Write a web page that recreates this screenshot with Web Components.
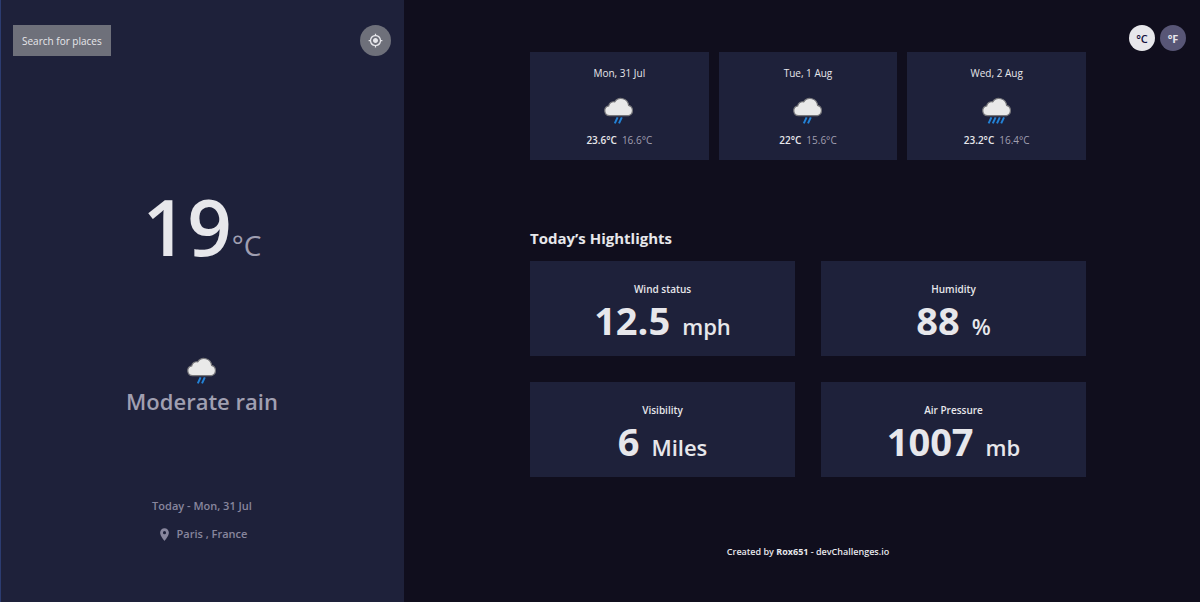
<!DOCTYPE html>
<html lang="en">
<head>
<meta charset="utf-8">
<meta name="viewport" content="width=device-width, initial-scale=1">
<title>Weather App</title>
<style>
  body {
    margin: 0;
    background: #100e1d;
    color: #e7e7eb;
    font-family: "Segoe UI", "Open Sans", "Noto Sans", sans-serif;
    --panel: #1e213a;
    --light: #e7e7eb;
    --muted: #a09fb1;
    --dim: #88869d;
  }
</style>
</head>
<body>
<weather-app></weather-app>
<script>
const define = (name, html, setup) => {
  const template = document.createElement('template');
  template.innerHTML = html;
  customElements.define(name, class extends HTMLElement {
    constructor() {
      super();
      this.attachShadow({ mode: 'open' }).append(template.content.cloneNode(true));
    }
    connectedCallback() {
      if (setup) setup(this);
    }
  });
};

// Cloud with two or four rain streaks, chosen by the "drops" attribute.
define('rain-icon', `
  <style>
    :host { display: block; width: 32px; height: 32px; }
    svg { display: block; width: 100%; height: 100%; }
    .four { display: none; }
    :host([drops="4"]) .four { display: block; }
    :host([drops="4"]) .two { display: none; }
  </style>
  <svg viewBox="0 0 32 32" aria-hidden="true">
    <path d="M6.600 21.600a4.900 4.900 0 0 1-.9-9.700 5 5 0 0 1 6-4A7.600 7.600 0 0 1 25.600 11.400a5.300 5.300 0 0 1 0 10.200z" fill="#e9e9e9" stroke="#77777b" stroke-width="1.200"/>
    <g stroke="#2382d6" stroke-width="2">
      <path class="two" d="M14.600 23.400l-2.800 6M18.800 23.400l-2.800 6"/>
      <path class="four" d="M10.400 23.400l-2.800 6M14.600 23.400l-2.800 6M18.800 23.400l-2.800 6M23 23.400l-2.800 6"/>
    </g>
  </svg>`);

define('unit-toggle', `
  <style>
    :host { display: flex; justify-content: flex-end; gap: 5px; }
    button {
      width: 26px; height: 26px; padding: 0; border: 0; border-radius: 50%;
      background: #585676; color: var(--light);
      font-family: inherit; font-size: 11px; font-weight: 700;
      text-align: center; cursor: pointer;
    }
    button[aria-pressed="true"] { background: var(--light); color: #110e3c; font-weight: 600; }
  </style>
  <button type="button" aria-pressed="true">°C</button>
  <button type="button" aria-pressed="false">°F</button>`,
  host => {
    const buttons = host.shadowRoot.querySelectorAll('button');
    buttons.forEach(b => b.onclick = () =>
      buttons.forEach(o => o.setAttribute('aria-pressed', o === b)));
  });

define('forecast-card', `
  <style>
    :host {
      display: flex; flex-direction: column; align-items: center;
      padding: 12px 8px; background: var(--panel); font-size: 10px; line-height: 18px;
    }
    rain-icon { margin: 12px 0 6px; }
    .range { display: flex; gap: 5px; line-height: 16px; }
    .max { font-weight: 600; }
    .min { color: var(--muted); }
  </style>
  <slot></slot>
  <rain-icon></rain-icon>
  <div class="range"><span class="max"></span><span class="min"></span></div>`,
  host => {
    const root = host.shadowRoot;
    root.querySelector('rain-icon').setAttribute('drops', host.getAttribute('drops'));
    root.querySelector('.max').textContent = host.getAttribute('max');
    root.querySelector('.min').textContent = host.getAttribute('min');
  });

define('highlight-card', `
  <style>
    :host { display: block; padding: 20px 8px 9px; background: var(--panel); text-align: center; }
    h3 { margin: 0 0 2px; font-size: 10px; line-height: 16px; font-weight: 600; }
    p {
      display: flex; justify-content: center; align-items: baseline; gap: 12px;
      margin: 0; font-size: 22px; line-height: 42px; font-weight: 600;
    }
    .value { font-size: 38px; font-weight: 700; }
  </style>
  <h3><slot></slot></h3>
  <p><span class="value"></span><span class="unit"></span></p>`,
  host => {
    host.shadowRoot.querySelector('.value').textContent = host.getAttribute('value');
    host.shadowRoot.querySelector('.unit').textContent = host.getAttribute('unit');
  });

define('current-weather', `
  <style>
    :host {
      display: flex; flex-direction: column; box-sizing: border-box;
      padding: 25px 13px 25px 12px; border-left: 1px solid #2c3c70;
      background: var(--panel); color: var(--muted); text-align: center;
    }
    .bar { display: flex; justify-content: space-between; }
    button { border: 0; background: #6e707a; color: var(--light); cursor: pointer; }
    .search { height: 31px; padding: 0 9px; font-family: inherit; font-size: 10px; }
    .locate { display: grid; place-items: center; width: 31px; height: 31px; padding: 0; border-radius: 50%; }
    .temp { display: flex; justify-content: center; align-items: baseline; margin-top: 114px; line-height: 112px; }
    .temp b { color: var(--light); font-size: 78px; font-weight: 600; }
    .temp span { font-size: 28px; line-height: 32px; }
    rain-icon { align-self: center; margin-top: 72px; }
    h1 { margin: 0; font-size: 22px; line-height: 30px; font-weight: 600; }
    p { margin: 0; color: var(--dim); font-size: 11px; line-height: 20px; font-weight: 600; }
    .date { margin-top: 80px; }
    .place { display: flex; justify-content: center; align-items: center; gap: 5px; margin-top: 8px; }
  </style>
  <div class="bar">
    <button class="search" type="button">Search for places</button>
    <button class="locate" type="button" aria-label="Use my location">
      <svg width="15" height="15" viewBox="0 0 24 24" fill="currentColor" aria-hidden="true"><path d="M12 8c-2.210 0-4 1.790-4 4s1.790 4 4 4 4-1.790 4-4-1.790-4-4-4zm8.940 3A8.994 8.994 0 0 0 13 3.060V1h-2v2.060A8.994 8.994 0 0 0 3.060 11H1v2h2.060A8.994 8.994 0 0 0 11 20.940V23h2v-2.060A8.994 8.994 0 0 0 20.940 13H23v-2h-2.060zM12 19c-3.870 0-7-3.130-7-7s3.130-7 7-7 7 3.130 7 7-3.130 7-7 7z"/></svg>
    </button>
  </div>
  <div class="temp"><b>19</b><span>°C</span></div>
  <rain-icon drops="2"></rain-icon>
  <h1>Moderate rain</h1>
  <p class="date">Today - Mon, 31 Jul</p>
  <p class="place">
    <svg width="15" height="15" viewBox="0 0 24 24" fill="currentColor" aria-hidden="true"><path d="M12 2C8.130 2 5 5.130 5 9c0 5.250 7 13 7 13s7-7.750 7-13c0-3.870-3.130-7-7-7zm0 9.500a2.500 2.500 0 0 1 0-5 2.500 2.500 0 0 1 0 5z"/></svg>
    <span>Paris , France</span>
  </p>`);

define('weather-app', `
  <style>
    :host { display: grid; grid-template-columns: 101fr 199fr; min-height: 100vh; }
    unit-toggle { padding: 25px 14px 1px 0; }
    .content { padding: 0 114px 0 126px; }
    .days { display: grid; grid-template-columns: repeat(3, 1fr); gap: 10px; }
    h2 { margin: 66px 0 11px; font-size: 15px; line-height: 24px; font-weight: 700; }
    .highlights { display: grid; grid-template-columns: repeat(2, 1fr); gap: 26px; }
    footer { margin-top: 67px; font-size: 9px; line-height: 16px; font-weight: 600; text-align: center; }
    a { color: inherit; text-decoration: none; }
    a.author { font-weight: 700; }
  </style>
  <current-weather></current-weather>
  <main>
    <unit-toggle></unit-toggle>
    <div class="content">
      <section class="days">
        <forecast-card drops="2" max="23.6°C" min="16.6°C">Mon, 31 Jul</forecast-card>
        <forecast-card drops="2" max="22°C" min="15.6°C">Tue, 1 Aug</forecast-card>
        <forecast-card drops="4" max="23.2°C" min="16.4°C">Wed, 2 Aug</forecast-card>
      </section>
      <h2>Today’s Hightlights</h2>
      <section class="highlights">
        <highlight-card value="12.5" unit="mph">Wind status</highlight-card>
        <highlight-card value="88" unit="%">Humidity</highlight-card>
        <highlight-card value="6" unit="Miles">Visibility</highlight-card>
        <highlight-card value="1007" unit="mb">Air Pressure</highlight-card>
      </section>
      <footer>Created by <a class="author" href="#">Rox651</a> - <a href="#">devChallenges.io</a></footer>
    </div>
  </main>`);
</script>
</body>
</html>
